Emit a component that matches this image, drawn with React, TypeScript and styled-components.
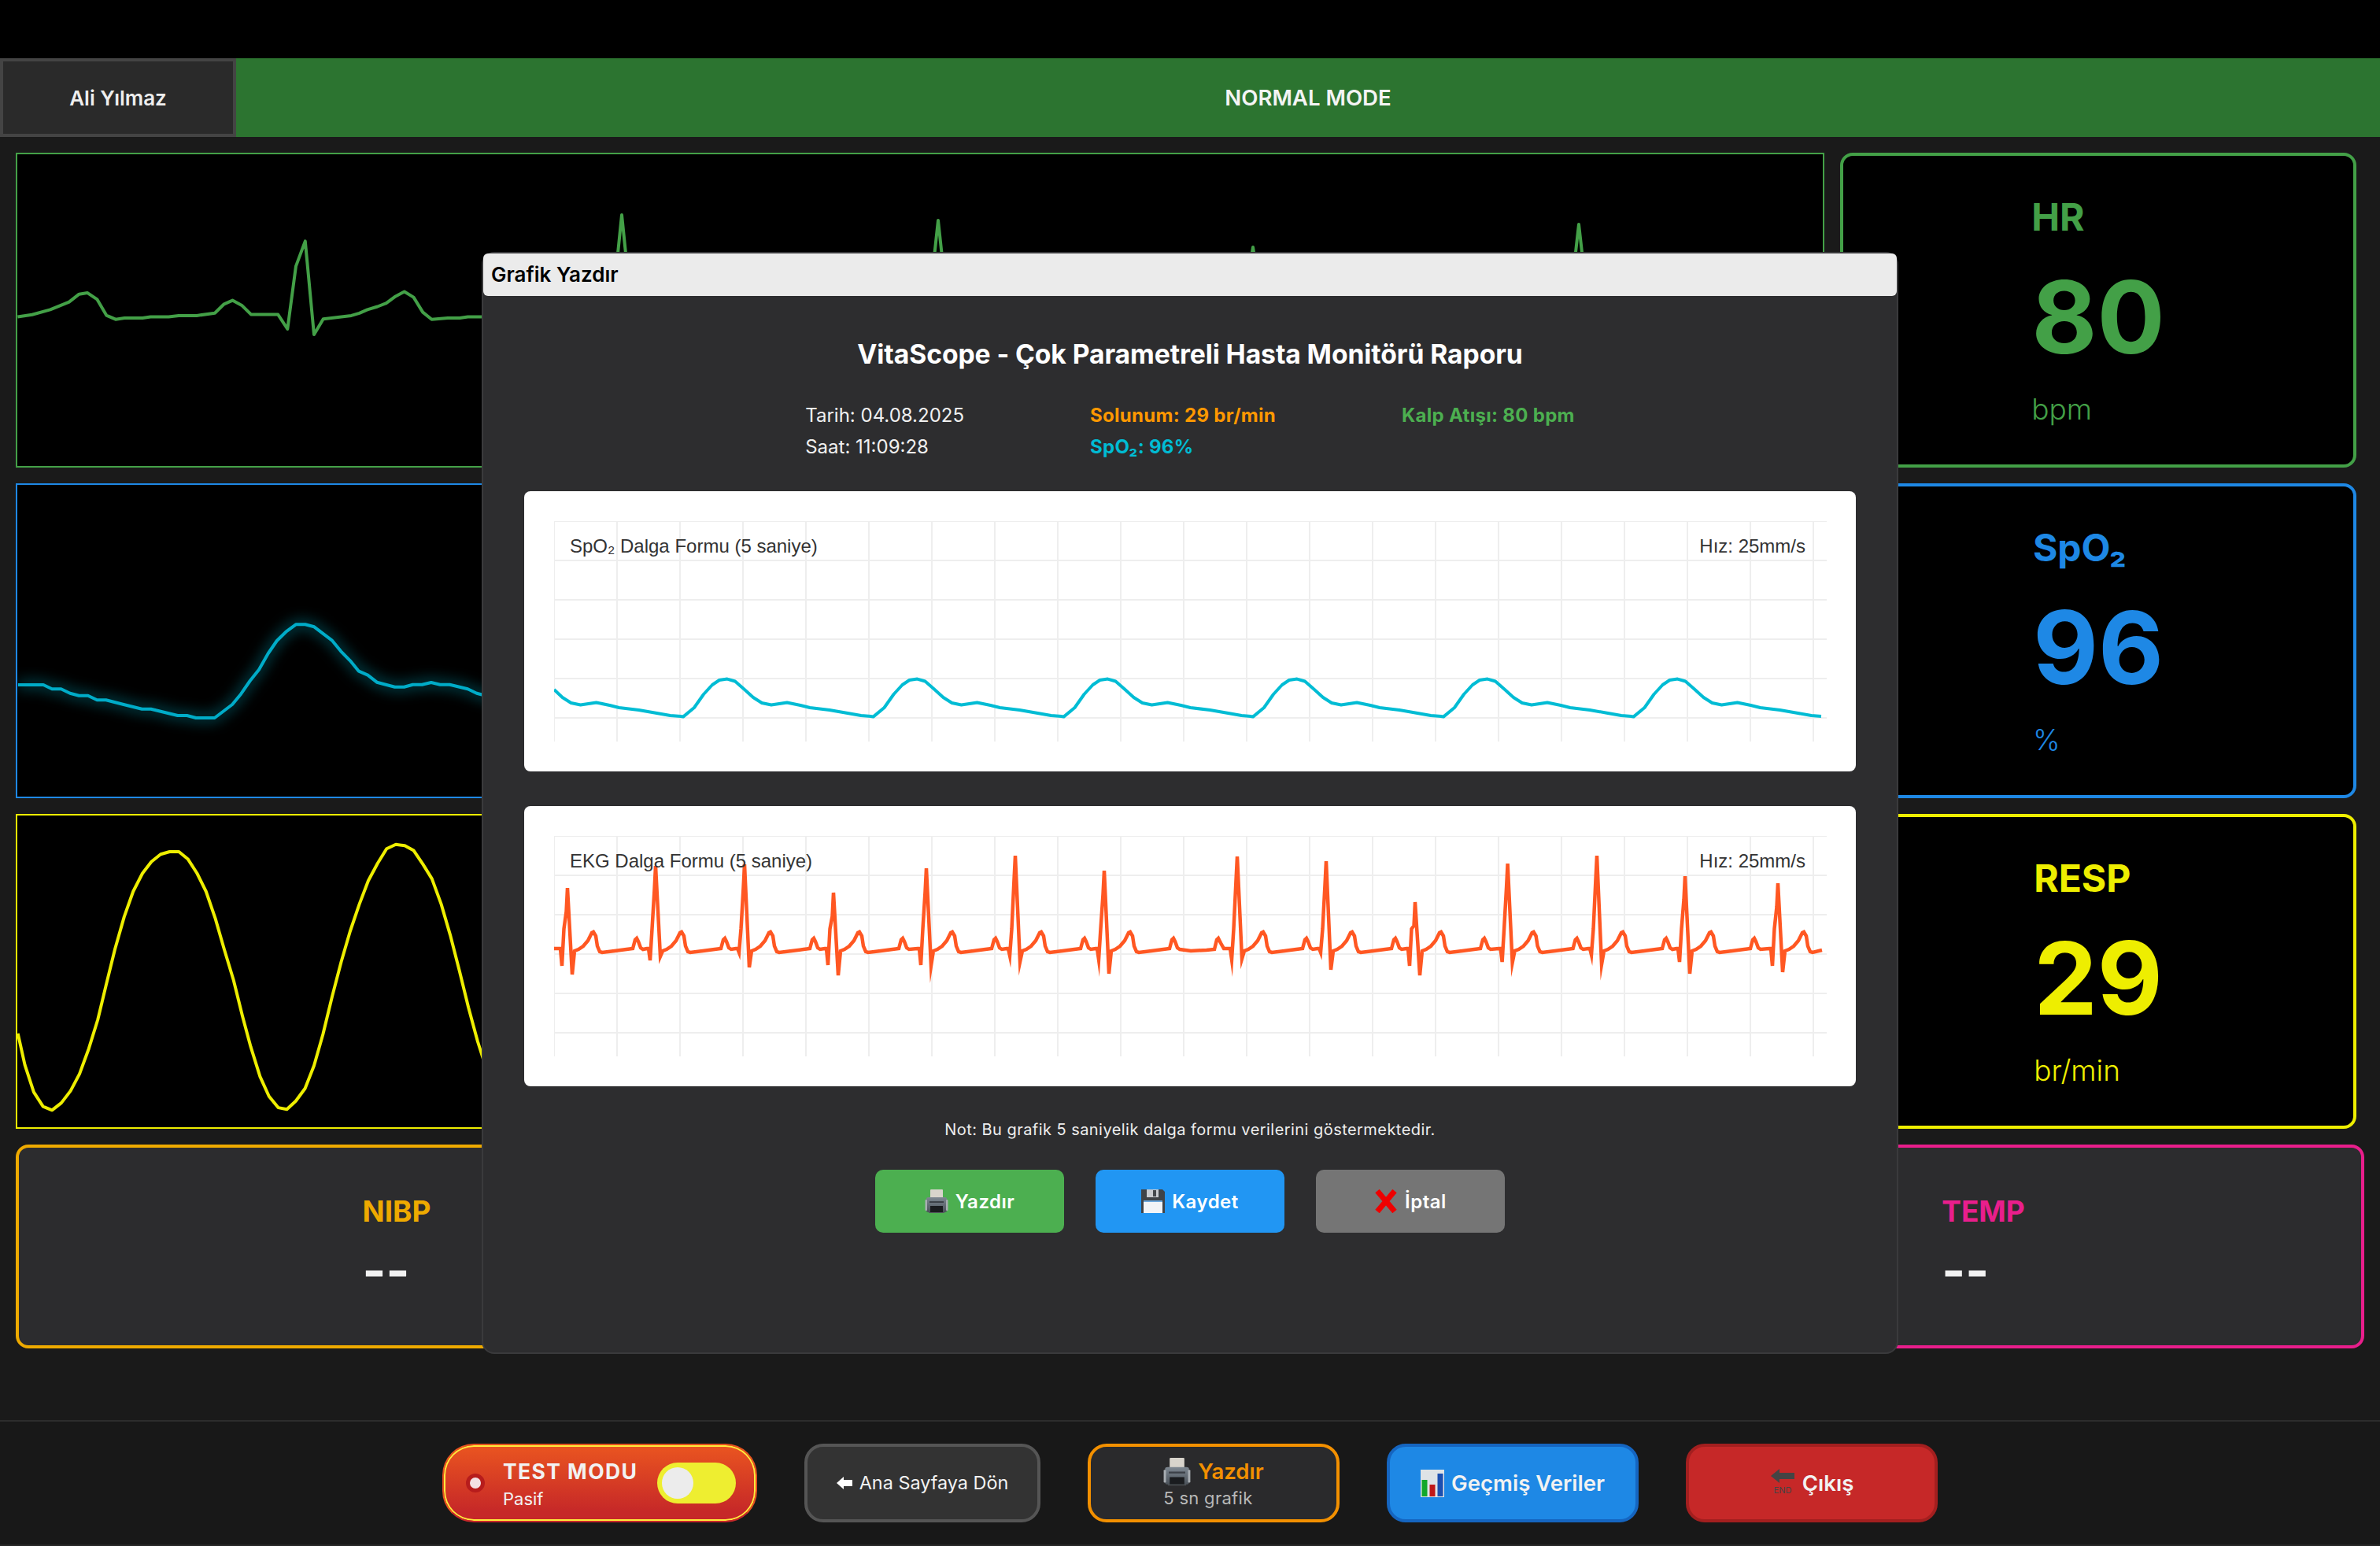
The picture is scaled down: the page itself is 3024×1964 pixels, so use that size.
import React from "react";
import styled, { createGlobalStyle } from "styled-components";

const GlobalStyle = createGlobalStyle`
  html, body {
    margin: 0;
    padding: 0;
    background: #000;
  }
  * {
    box-sizing: border-box;
  }
  body {
    font-family: Inter, "Noto Sans", sans-serif;
  }
`;

type Pt = [number, number];

// waveform samples read off the monitor, in screen px / scale
const toLocal = (pts: Pt[], sx: number, sy: number, ox: number, oy: number) =>
  pts.map(([x, y]): Pt => [x / sx - ox, y / sy - oy]);

const toPath = (pts: Pt[]) =>
  pts.map(([x, y]) => `${x.toFixed(1)},${y.toFixed(1)}`).join(" ");

const hrFirst: Pt[] = [
  [44, 1018], [80, 1011], [125, 995], [172, 970], [197, 945], [218, 941], [242, 962],
  [265, 1013], [288, 1026], [310, 1022], [355, 1022], [375, 1018], [420, 1018],
  [445, 1014], [490, 1014], [535, 1006], [558, 977], [579, 965], [603, 982], [625, 1010],
  [692, 1010], [716, 1057], [737, 855], [760, 775], [782, 1075], [805, 1025], [850, 1018],
  [875, 1014], [895, 1006], [915, 995], [940, 985], [962, 974], [985, 952], [1007, 937],
  [1030, 955], [1053, 1003], [1075, 1026], [1115, 1022], [1145, 1022], [1165, 1018], [1240, 1018],
];

const hrSpikes: Pt[] = [[790, 273], [1192, 280], [1592, 314], [2006, 285]];

const hrWave: Pt[] = [
  ...toLocal(hrFirst, 1.96, 2.529, 22, 196),
  ...hrSpikes.flatMap(([x, top]): Pt[] => [
    [x - 13 - 22, 204],
    [x - 22, top - 196],
    [x + 13 - 22, 204],
  ]),
];

const spo2Wave = toLocal(
  [
    [56, 450], [135, 450], [162, 466], [190, 466], [218, 482], [246, 491], [274, 491],
    [302, 508], [330, 508], [385, 525], [442, 542], [470, 542], [553, 567], [582, 567],
    [610, 576], [668, 576], [723, 525], [750, 485], [778, 435], [806, 392], [835, 330],
    [862, 282], [890, 248], [921, 220], [950, 220], [978, 229], [1033, 280], [1061, 322],
    [1090, 358], [1117, 398], [1145, 413], [1173, 440], [1229, 458], [1258, 458],
    [1285, 449], [1314, 449], [1342, 441], [1370, 449], [1400, 449], [1456, 466],
    [1484, 482], [1540, 500],
  ],
  2.45,
  3,
  22,
  -104,
);

const respWave = toLocal(
  [
    [54, 638], [75, 725], [102, 800], [130, 840], [157, 850], [185, 830], [213, 797],
    [240, 750], [268, 680], [295, 600], [320, 505], [347, 405], [375, 315], [402, 245],
    [430, 195], [457, 163], [485, 142], [512, 135], [540, 135], [567, 155], [595, 195],
    [622, 245], [650, 320], [677, 405], [705, 490], [732, 590], [757, 675], [785, 757],
    [812, 812], [840, 843], [866, 848], [893, 825], [921, 790], [948, 727], [975, 640],
    [1003, 535], [1030, 440], [1057, 355], [1085, 280], [1112, 215], [1140, 167],
    [1167, 127], [1195, 115], [1222, 118], [1249, 132], [1277, 170], [1304, 210],
    [1332, 280], [1359, 365], [1387, 465], [1414, 565], [1442, 660], [1480, 770],
  ],
  2.376,
  2.178,
  22,
  16,
);

// one SpO2 print cycle, offset from its peak
const spo2Cycle: Pt[] = [
  [-59, 248], [-56, 248.6], [-42, 237], [-30, 220], [-19, 208], [-10, 202], [0, 200.6],
  [10, 203.5], [22, 214], [33, 224], [44, 231], [56, 233.5], [76, 230.5], [93, 234],
  [105, 237], [130, 240], [153, 244], [170, 247],
];

const spo2PrintPeaks = [-22.4, 220, 461.5, 703.5, 944, 1186, 1427.5];

const spo2Print: Pt[] = [
  [0, 214],
  ...spo2PrintPeaks
    .flatMap((peak) => spo2Cycle.map(([dx, y]): Pt => [peak + dx, y]))
    .filter(([x]) => x > 0 && x < 1610),
  [1610, 248],
];

// R wave x, R top, Q depth, S depth for each beat on the EKG strip
const ekgBeats: [number, number, number, number][] = [
  [17, 66, 165, 176], [129, 38, 158, 153], [242, 36, 148, 167], [355, 72, 164, 177],
  [473, 41, 164, 165], [586, 25, 152, 160], [699, 44, 157, 175], [868, 26, 157, 156],
  [981, 32, 148, 170], [1094, 84, 165, 177], [1211.6, 35, 160, 161], [1325, 25, 151, 163],
  [1437, 51, 160, 175], [1555, 60, 165, 173],
];

const ekgBeat = (r: number, top: number, q: number, s: number): Pt[] =>
  [
    [-11, 143], [-9, 143], [-7, q], [-4.5, 118], [-1.5, top + 30], [0, top], [6, s], [9, 146],
    [14, 144], [20, 140], [26, 133], [31, 123], [33, 122], [36, 127], [38, 140], [41, 147],
    [44, 148], [60, 146], [75, 144], [83, 143], [86, 132], [88, 130], [90, 134], [93, 142],
    [96, 144],
  ].map(([dx, y]): Pt => [r + dx, y]);

const ekgPrint: Pt[] = [
  [0, 143],
  ...ekgBeats.flatMap(([r, top, q, s], i) => {
    const next = ekgBeats[i + 1];
    const beat = ekgBeat(r, top, q, s);
    if (next && next[0] - r > 150) {
      // the long beat: one more P wave before the next R
      return [
        ...beat,
        [r + 110, 146] as Pt,
        [r + 130, 145] as Pt,
        [r + 140, 144] as Pt,
        [r + 143, 132] as Pt,
        [r + 145, 130] as Pt,
        [r + 148, 136] as Pt,
        [r + 152, 143] as Pt,
      ];
    }
    return next ? beat : beat.filter(([x]) => x < 1611);
  }),
  [1611, 145],
];

const hLines = [0, 50, 100, 150, 200, 250];
const vLines = Array.from({ length: 21 }, (_, i) => i * 80);

const PageWrap = styled.div`
  width: 3024px;
  height: 1964px;
  background: #1a1a1a;
  display: flex;
  flex-direction: column;
  overflow: hidden;
  position: relative;
`;

const TopStrip = styled.div`
  height: 74px;
  background: #000;
`;

const HeaderBar = styled.header`
  height: 100px;
  display: flex;
`;

const PatientBox = styled.div`
  width: 300px;
  background: #2a2a2a;
  border: 4px solid #444;
  color: #eee;
  font-size: 26px;
  font-weight: 600;
  display: flex;
  align-items: center;
  justify-content: center;
`;

const ModeBar = styled.div`
  flex: 1;
  background: #2c7430;
  color: #f4f4f4;
  font-size: 27.6px;
  font-weight: 600;
  display: flex;
  align-items: center;
  justify-content: center;
`;

const MainArea = styled.main`
  flex: 1;
  padding: 20px 20px 0;
  display: flex;
  flex-direction: column;
  gap: 20px;
`;

const WaveGrid = styled.div`
  display: grid;
  grid-template-columns: 2298px 656px;
  grid-auto-rows: 400px;
  gap: 20px;
`;

const WaveBox = styled.div<{ $color: string }>`
  border: 2px solid ${({ $color }) => $color};
  background: #000;
  overflow: hidden;

  svg {
    display: block;
    width: 100%;
    height: 100%;
  }
`;

const VitalCard = styled.div<{ $color: string }>`
  border: 4px solid ${({ $color }) => $color};
  border-radius: 16px;
  background: #000;
  color: ${({ $color }) => $color};
  display: flex;
  flex-direction: column;
  align-items: center;
  justify-content: center;
`;

const VitalColumn = styled.div`
  display: flex;
  flex-direction: column;
  align-items: flex-start;
`;

const VitalLabel = styled.div`
  font-size: 48px;
  font-weight: 700;
  line-height: 58px;
`;

const VitalValue = styled.div`
  font-size: 128px;
  font-weight: 700;
  line-height: 155px;
  margin: 20px 0 18px;
`;

const VitalUnit = styled.div`
  font-size: 37px;
  font-weight: 300;
  line-height: 44px;
`;

const SmallCards = styled.div`
  display: grid;
  grid-template-columns: 968px 1fr 968px;
  gap: 20px;
  height: 259px;
`;

const SmallCard = styled.div<{ $color: string }>`
  border: 4px solid ${({ $color }) => $color};
  border-radius: 16px;
  background: #2c2c2e;
  color: ${({ $color }) => $color};
  display: flex;
  align-items: center;
  justify-content: center;
`;

const SmallLabel = styled.div`
  font-size: 37px;
  font-weight: 700;
  line-height: 48px;
`;

const SmallValue = styled.div`
  font-size: 64px;
  font-weight: 700;
  line-height: 78px;
  color: #f2f2f2;
  margin-top: 12px;
`;

const FooterBar = styled.footer`
  height: 160px;
  border-top: 2px solid #2c2c2c;
  border-bottom: 2px solid #262626;
  background: #181818;
  display: flex;
  align-items: center;
  justify-content: center;
  gap: 60px;
`;

const TestButton = styled.button`
  width: 400px;
  height: 100px;
  border-radius: 40px;
  border: 2px solid #e5521f;
  border-bottom-color: #c62828;
  box-shadow: inset 0 0 0 2px #ffeb3b;
  background: linear-gradient(180deg, #ea5520 0%, #c62828 88%);
  color: #f2f2f2;
  display: flex;
  align-items: center;
  padding: 0 25px 0 28px;
  font-family: inherit;
`;

const StatusDot = styled.span`
  width: 24px;
  height: 24px;
  border-radius: 50%;
  background: #f3e1e4;
  border: 5px solid #b71c1c;
  flex-shrink: 0;
`;

const TestText = styled.span`
  display: flex;
  flex-direction: column;
  align-items: flex-start;
  margin-left: 23px;
  padding-top: 2px;
  flex: 1;
`;

const TestTitle = styled.span`
  font-size: 26.5px;
  font-weight: 700;
  letter-spacing: 1.4px;
  line-height: 34px;
`;

const TestSub = styled.span`
  font-size: 22px;
  line-height: 28px;
  margin-top: 4px;
`;

const ToggleTrack = styled.span`
  width: 100px;
  height: 52px;
  border-radius: 26px;
  background: #eeee30;
  padding: 6px;
  display: flex;
  flex-shrink: 0;
`;

const ToggleKnob = styled.span`
  width: 40px;
  height: 40px;
  border-radius: 50%;
  background: #ececec;
`;

const FootButton = styled.button<{ $bg: string; $line: string; $fg?: string; $wide?: boolean }>`
  width: ${({ $wide }) => ($wide ? 320 : 300)}px;
  height: 100px;
  border-radius: 24px;
  border: 4px solid ${({ $line }) => $line};
  background: ${({ $bg }) => $bg};
  color: ${({ $fg }) => $fg || "#f2f2f2"};
  font-family: inherit;
  display: flex;
  align-items: center;
  justify-content: center;
`;

const FootStack = styled.span`
  display: flex;
  flex-direction: column;
  align-items: flex-start;
`;

const FootRow = styled.span`
  display: flex;
  align-items: center;
  gap: 9px;
`;

const FootPlain = styled.span`
  font-size: 23.4px;
  font-weight: 400;
  line-height: 30px;
`;

const FootStrong = styled.span`
  font-size: 27.6px;
  font-weight: 600;
  line-height: 34px;
`;

const FootSub = styled.span`
  font-size: 22px;
  line-height: 28px;
  color: #b8b8b8;
  letter-spacing: 0.3px;
  margin-top: 2px;
`;

const Overlay = styled.div`
  position: absolute;
  inset: 0;
  display: flex;
  justify-content: center;
  align-items: flex-start;
  padding-top: 320px;
`;

const Dialog = styled.section`
  width: 1800px;
  height: 1400px;
  background: #2d2d2f;
  border: 2px solid #3a3a3c;
  border-radius: 16px;
  display: flex;
  flex-direction: column;
`;

const TitleBar = styled.div`
  height: 54px;
  flex-shrink: 0;
  background: #ebebeb;
  border-radius: 6px;
  color: #000;
  font-size: 26px;
  font-weight: 600;
  padding: 0 0 2px 10px;
  display: flex;
  align-items: center;
`;

const DialogBody = styled.div`
  flex: 1;
  padding: 0 52px;
  display: flex;
  flex-direction: column;
  align-items: center;
`;

const ReportTitle = styled.h2`
  margin: 52px 0 0;
  font-size: 33.7px;
  font-weight: 700;
  letter-spacing: -0.1px;
  line-height: 44px;
  color: #fff;
`;

const InfoRow = styled.div`
  display: flex;
  gap: 160px;
  margin-top: 36px;
`;

const InfoColumn = styled.div`
  display: flex;
  flex-direction: column;
`;

const InfoLine = styled.div<{ $color?: string }>`
  font-size: 24px;
  line-height: 40px;
  font-weight: ${({ $color }) => ($color ? 700 : 400)};
  letter-spacing: ${({ $color }) => ($color ? 0.3 : 0)}px;
  color: ${({ $color }) => $color || "#f0f0f0"};
  white-space: nowrap;
`;

const ChartPanel = styled.div`
  width: 1692px;
  height: 356px;
  background: #fff;
  border-radius: 8px;
  padding: 38px;
  margin-top: 44px;

  ${InfoRow} + & {
    margin-top: 36px;
  }
`;

const ChartFrame = styled.div`
  position: relative;
  width: 1617px;
  height: 280px;

  svg {
    display: block;
    width: 100%;
    height: 100%;
  }
`;

const ChartCaption = styled.div`
  position: absolute;
  top: 18px;
  left: 20px;
  right: 27px;
  display: flex;
  justify-content: space-between;
  font-family: "Liberation Sans", Arial, sans-serif;
  font-size: 24px;
  line-height: 28px;
  color: #333;
`;

const NoteText = styled.p`
  margin: 41px 0 0;
  font-size: 20px;
  line-height: 28px;
  letter-spacing: 0.45px;
  color: #eee;
`;

const ActionRow = styled.div`
  display: flex;
  gap: 40px;
  margin-top: 37px;
`;

const ActionButton = styled.button<{ $bg: string }>`
  width: 240px;
  height: 80px;
  border: none;
  border-radius: 10px;
  background: ${({ $bg }) => $bg};
  color: #fff;
  font-family: inherit;
  font-size: 24px;
  font-weight: 600;
  letter-spacing: 0.5px;
  display: flex;
  align-items: center;
  justify-content: center;
  gap: 9px;
`;

const PrinterIcon = ({ size = 30 }: { size?: number }) => (
  <svg width={size} height={size} viewBox="0 0 30 30">
    <defs>
      <linearGradient id="printerBody" x1="0" x2="0" y1="0" y2="1">
        <stop offset="0" stopColor="#7d8791" />
        <stop offset="1" stopColor="#4b525a" />
      </linearGradient>
    </defs>
    <rect x="7" y="0" width="16" height="11" rx="1" fill="#d8d4cc" />
    <path d="M2 12 Q2 10 5 10 H25 Q28 10 28 12 V27 Q28 29 25 29 H5 Q2 29 2 27 Z" fill="url(#printerBody)" />
    <rect x="0.5" y="13" width="2.5" height="14" rx="1" fill="#a8adb2" />
    <rect x="27" y="13" width="2.5" height="14" rx="1" fill="#a8adb2" />
    <rect x="6" y="15" width="18" height="2" fill="#3c4148" />
    <rect x="7" y="21" width="16" height="8" fill="#1a1c1f" />
    <rect x="5" y="29" width="20" height="1" fill="#55595e" />
  </svg>
);

const FloppyIcon = () => (
  <svg width="30" height="30" viewBox="0 0 30 30">
    <path d="M0 0 H27 L30 3 V30 H0 Z" fill="#3f4347" />
    <rect x="7" y="0" width="15" height="10" fill="#c9ccd0" />
    <rect x="15" y="1" width="4" height="8" fill="#44484c" />
    <rect x="3" y="14" width="24" height="16" fill="#f2f4f7" />
    <rect x="3" y="14" width="24" height="2" fill="#6ea8dc" />
  </svg>
);

const CrossIcon = () => (
  <svg width="30" height="30" viewBox="0 0 30 30">
    <path d="M4 2 L26 28 M26 2 L4 28" stroke="#ee0000" strokeWidth="7" fill="none" />
  </svg>
);

const ChartIcon = () => (
  <svg width="30" height="35" viewBox="0 0 30 35">
    <rect x="0" y="0" width="30" height="35" fill="#dfe3e6" />
    <rect x="1.5" y="13" width="7" height="21" fill="#12a82a" />
    <rect x="11.5" y="19" width="7" height="15" fill="#c01818" />
    <rect x="21.5" y="5" width="7" height="29" fill="#1c4fb0" />
  </svg>
);

const BackArrow = () => (
  <svg width="20" height="16" viewBox="0 0 20 16">
    <path d="M0 8 L9 0 V4 H20 V12 H9 V16 Z" fill="#fff" />
  </svg>
);

const EndIcon = () => (
  <svg width="32" height="36" viewBox="0 0 32 36">
    <path d="M1 9 L12 0 V5 H31 V13 H12 V18 Z" fill="#444" />
    <text x="16" y="31" textAnchor="middle" fontFamily="Inter" fontSize="11" fill="#444">
      END
    </text>
  </svg>
);

const PrintGrid = () => (
  <>
    {hLines.map((y) => (
      <line key={`h${y}`} x1="0" x2="1617" y1={y} y2={y} stroke="#eee" strokeWidth="2" />
    ))}
    {vLines.map((x) => (
      <line key={`v${x}`} x1={x} x2={x} y1="0" y2="280" stroke="#eee" strokeWidth="2" />
    ))}
  </>
);

const vitals = [
  { label: "HR", value: "80", unit: "bpm", color: "#43a047" },
  { label: "SpO₂", value: "96", unit: "%", color: "#1e88e5" },
  { label: "RESP", value: "29", unit: "br/min", color: "#eeee00" },
];

const waves = [
  { color: "#43a047", points: hrWave, stroke: "#43a047", glow: false },
  { color: "#1e88e5", points: spo2Wave, stroke: "#00acc8", glow: true },
  { color: "#eeee00", points: respWave, stroke: "#eeee00", glow: false },
];

const App = () => (
  <PageWrap>
    <GlobalStyle />
    <TopStrip />
    <HeaderBar>
      <PatientBox>Ali Yılmaz</PatientBox>
      <ModeBar>NORMAL MODE</ModeBar>
    </HeaderBar>
    <MainArea>
      <WaveGrid>
        {waves.map((wave, i) => (
          <React.Fragment key={wave.color}>
            <WaveBox $color={wave.color}>
              <svg style={wave.glow ? { filter: "drop-shadow(0 0 9px #00bcd4)" } : undefined}>
                <polyline
                  points={toPath(wave.points)}
                  fill="none"
                  stroke={wave.stroke}
                  strokeWidth="4"
                  strokeLinejoin="round"
                />
              </svg>
            </WaveBox>
            <VitalCard $color={vitals[i].color}>
              <VitalColumn>
                <VitalLabel>{vitals[i].label}</VitalLabel>
                <VitalValue>{vitals[i].value}</VitalValue>
                <VitalUnit>{vitals[i].unit}</VitalUnit>
              </VitalColumn>
            </VitalCard>
          </React.Fragment>
        ))}
      </WaveGrid>
      <SmallCards>
        <SmallCard $color="#eeaa00">
          <VitalColumn>
            <SmallLabel>NIBP</SmallLabel>
            <SmallValue>--</SmallValue>
          </VitalColumn>
        </SmallCard>
        <SmallCard $color="#1e88e5" />
        <SmallCard $color="#e91e8c">
          <VitalColumn>
            <SmallLabel>TEMP</SmallLabel>
            <SmallValue>--</SmallValue>
          </VitalColumn>
        </SmallCard>
      </SmallCards>
    </MainArea>
    <FooterBar>
      <TestButton>
        <StatusDot />
        <TestText>
          <TestTitle>TEST MODU</TestTitle>
          <TestSub>Pasif</TestSub>
        </TestText>
        <ToggleTrack>
          <ToggleKnob />
        </ToggleTrack>
      </TestButton>
      <FootButton $bg="#333" $line="#555">
        <FootRow>
          <BackArrow />
          <FootPlain>Ana Sayfaya Dön</FootPlain>
        </FootRow>
      </FootButton>
      <FootButton $wide $bg="#2a2a2c" $line="#f39000" $fg="#f39000">
        <FootStack>
          <FootRow>
            <PrinterIcon size={35} />
            <FootStrong>Yazdır</FootStrong>
          </FootRow>
          <FootSub>5 sn grafik</FootSub>
        </FootStack>
      </FootButton>
      <FootButton $wide $bg="#1e88e5" $line="#1565c0">
        <FootRow>
          <ChartIcon />
          <FootStrong>Geçmiş Veriler</FootStrong>
        </FootRow>
      </FootButton>
      <FootButton $wide $bg="#c62828" $line="#a31f1f">
        <FootRow>
          <EndIcon />
          <FootStrong>Çıkış</FootStrong>
        </FootRow>
      </FootButton>
    </FooterBar>
    <Overlay>
      <Dialog>
        <TitleBar>Grafik Yazdır</TitleBar>
        <DialogBody>
          <ReportTitle>VitaScope - Çok Parametreli Hasta Monitörü Raporu</ReportTitle>
          <InfoRow>
            <InfoColumn>
              <InfoLine>Tarih: 04.08.2025</InfoLine>
              <InfoLine>Saat: 11:09:28</InfoLine>
            </InfoColumn>
            <InfoColumn>
              <InfoLine $color="#ff9800">Solunum: 29 br/min</InfoLine>
              <InfoLine $color="#00bcd4">SpO₂: 96%</InfoLine>
            </InfoColumn>
            <InfoColumn>
              <InfoLine $color="#4caf50">Kalp Atışı: 80 bpm</InfoLine>
            </InfoColumn>
          </InfoRow>
          <ChartPanel>
            <ChartFrame>
              <svg>
                <PrintGrid />
                <polyline
                  points={toPath(spo2Print)}
                  fill="none"
                  stroke="#00bcd4"
                  strokeWidth="4"
                  strokeLinejoin="round"
                />
              </svg>
              <ChartCaption>
                <span>SpO₂ Dalga Formu (5 saniye)</span>
                <span>Hız: 25mm/s</span>
              </ChartCaption>
            </ChartFrame>
          </ChartPanel>
          <ChartPanel>
            <ChartFrame>
              <svg>
                <PrintGrid />
                <polyline
                  points={toPath(ekgPrint)}
                  fill="none"
                  stroke="#ff5722"
                  strokeWidth="4.5"
                  strokeLinejoin="miter"
                  strokeMiterlimit="10"
                />
              </svg>
              <ChartCaption>
                <span>EKG Dalga Formu (5 saniye)</span>
                <span>Hız: 25mm/s</span>
              </ChartCaption>
            </ChartFrame>
          </ChartPanel>
          <NoteText>Not: Bu grafik 5 saniyelik dalga formu verilerini göstermektedir.</NoteText>
          <ActionRow>
            <ActionButton $bg="#4caf50">
              <PrinterIcon />
              Yazdır
            </ActionButton>
            <ActionButton $bg="#2196f3">
              <FloppyIcon />
              Kaydet
            </ActionButton>
            <ActionButton $bg="#757575">
              <CrossIcon />
              İptal
            </ActionButton>
          </ActionRow>
        </DialogBody>
      </Dialog>
    </Overlay>
  </PageWrap>
);

export default App;
